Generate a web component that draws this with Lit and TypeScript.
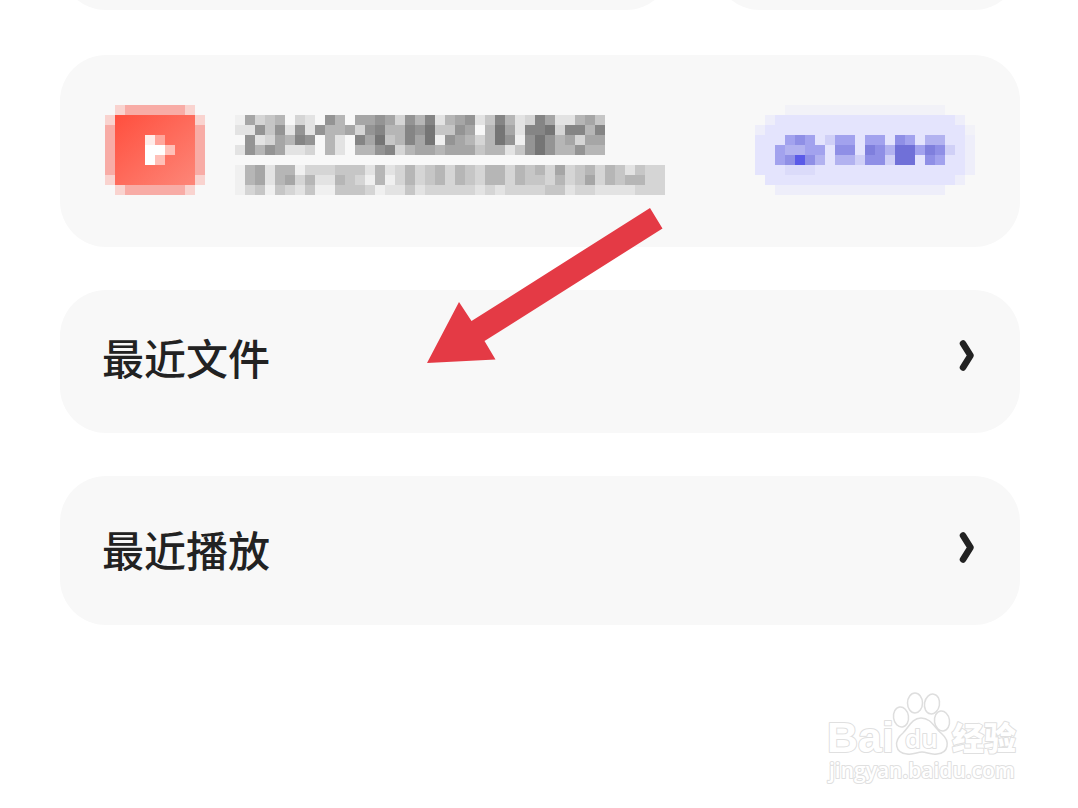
import { LitElement, html, svg, css } from "lit";
import { customElement, property } from "lit/decorators.js";

const CELL = 10;

// Each character is one mosaic cell: a key of the colour table, a dot is empty.
const TITLE = [
  "fadcb.de.9b.aa9ad9b8eba9ec8bed8aeebac",
  "ee9c9e9e9bbad98bb897cc9a.b7ae887d88b8",
  ".9edab89.be.8a7cb8a7f9abdb79f979badaa",
  "e9b9aeed.be.bb98dbaabaaacbbec979bb9bb",
];
const SUBTITLE = [
  "fbaebbfdddcccebedbdcbdbcdbbdbcbdadcbdbcecdd",
  "fbaebadbeebcdfbfdbdcbdbcdbbdbccdbdcadbcbbdd",
  "fdcfcdecffcccdfeecedddddededdddcceddeeeeddd",
];
const GREYS: Record<string, string> = {
  "7": "#757575",
  "8": "#858585",
  "9": "#949494",
  a: "#a6a6a6",
  b: "#b6b6b6",
  c: "#c6c6c6",
  d: "#d5d5d5",
  e: "#e3e3e3",
  f: "#f0f0f0",
};

const VIDEO = [
  ".lmmmmmml.",
  "l........l",
  "m........m",
  "m...pq...m",
  "m...wwr..m",
  "m...wr...m",
  "m........m",
  "l........l",
  ".lmmmmmml.",
];
const VIDEO_COLOURS = {
  l: "#f9d3cf",
  m: "#f8aca6",
  w: "#ffffff",
  p: "#ffece9",
  q: "#ffa69c",
  r: "#ffc0b8",
};

const BACKUP = [
  "...gggggggggggggggg...",
  ".feeeeeeeeeeeeeeeeeef.",
  "feeeeeeeeeeeeeeeeeeeeg",
  "eeebabedbbebbeabecceef",
  "eebccbbeaae9ac88b9adef",
  "eeba6aceccdaad88eabeef",
  "eeehhheeeeeeeeeeeeeeef",
  ".eeeeeeeeeeeeeeeeeeef.",
  "..fffffffffffffffff...",
];
const BACKUP_COLOURS = {
  "6": "#5a5ae8",
  "8": "#7070d8",
  "9": "#7f7fdd",
  a: "#8f8fe6",
  b: "#a2a2ee",
  c: "#b2b2f0",
  d: "#d0d0f7",
  e: "#e4e4fd",
  f: "#eeeefa",
  g: "#f2f2f8",
  h: "#dbdbfa",
};

const mosaic = (rows: string[], colours: Record<string, string>) =>
  rows.map((row, y) =>
    [...row].map((c, x) =>
      colours[c]
        ? svg`<rect x=${x * CELL} y=${y * CELL} width=${CELL} height=${CELL} fill=${colours[c]} shape-rendering="crispEdges"></rect>`
        : null
    )
  );

@customElement("mosaic-grid")
class MosaicGrid extends LitElement {
  @property({ attribute: false }) rows: string[] = [];
  @property({ attribute: false }) colours: Record<string, string> = GREYS;

  static styles = css`
    :host { display: block; }
    svg { display: block; }
  `;

  render() {
    return html`<svg width=${this.rows[0].length * CELL} height=${this.rows.length * CELL} aria-hidden="true">
      ${mosaic(this.rows, this.colours)}
    </svg>`;
  }
}

@customElement("app-root")
class AppRoot extends LitElement {
  static styles = css`
    :host {
      display: block;
      font-family: "Noto Sans CJK SC", sans-serif;
      color: #222;
      background: #fff;
    }
    * { box-sizing: border-box; }
    .page {
      display: flex;
      flex-direction: column;
      gap: 43px;
      min-height: 100vh;
      padding: 0 58px 20px 60px;
      overflow: hidden;
    }
    .card { background: #f8f8f8; border-radius: 46px; }
    .tiles {
      display: grid;
      grid-template-columns: 2fr 1fr;
      gap: 42px;
      margin: -90px 0 2px;
    }
    .tile { height: 100px; }
    .backup {
      display: flex;
      align-items: flex-start;
      gap: 30px;
      padding: 50px 45px 52px;
    }
    .video { display: block; flex: none; }
    .info {
      display: flex;
      flex-direction: column;
      gap: 10px;
      flex: 1;
      padding-top: 10px;
    }
    .action {
      border: 0;
      padding: 0;
      background: none;
      cursor: pointer;
    }
    .row {
      position: relative;
      display: flex;
      justify-content: space-between;
      align-items: flex-start;
      padding: 37px 45px 46px 42px;
      color: inherit;
      text-decoration: none;
      font-size: 42px;
      font-weight: 500;
      line-height: 60px;
    }
    .row.last { padding-top: 43px; }
    .chevron { display: block; margin-top: 12px; }
    .arrow {
      position: absolute;
      left: 367px;
      top: -82px;
      pointer-events: none;
    }
    .mark { align-self: flex-end; margin-top: auto; }
    .mark svg { display: block; }
    .outline {
      fill: #fff;
      stroke: #e0e0e0;
      stroke-width: 2px;
      paint-order: stroke;
      stroke-linejoin: round;
    }
    .url { font-family: "Open Sans", sans-serif; font-weight: 600; }
    .brand { font-family: "Liberation Sans", sans-serif; font-weight: 700; }
    .du { font-family: "Open Sans", sans-serif; font-weight: 600; }
    .paw { fill: #fff; stroke: #dedede; stroke-width: 1.5px; }
  `;

  private chevron() {
    return html`<svg class="chevron" width="16" height="34" viewBox="0 0 16 34" aria-hidden="true">
      <path d="M4 4.500 L11.500 16.500 L4 28.500" fill="none" stroke="#222" stroke-width="6.500" stroke-linecap="round" stroke-linejoin="round" />
    </svg>`;
  }

  render() {
    return html`<main class="page">
      <div class="tiles">
        <div class="card tile"></div>
        <div class="card tile"></div>
      </div>

      <section class="card backup">
        <svg class="video" width="100" height="90" aria-hidden="true">
          <defs>
            <linearGradient id="red" x1="0" y1="0" x2="1" y2="1">
              <stop offset="0" stop-color="#ff4f3e" />
              <stop offset="1" stop-color="#fd8678" />
            </linearGradient>
          </defs>
          <rect x="10" y="10" width="80" height="70" fill="url(#red)" />
          ${mosaic(VIDEO, VIDEO_COLOURS)}
        </svg>
        <div class="info">
          <mosaic-grid .rows=${TITLE}></mosaic-grid>
          <mosaic-grid .rows=${SUBTITLE}></mosaic-grid>
        </div>
        <button class="action" type="button" aria-label="备份">
          <mosaic-grid .rows=${BACKUP} .colours=${BACKUP_COLOURS}></mosaic-grid>
        </button>
      </section>

      <a class="card row" href="#files">
        <span>最近文件</span>
        ${this.chevron()}
        <svg class="arrow" width="236" height="156" viewBox="0 0 236 156" aria-hidden="true">
          <path d="M223 0 L235.500 20.500 L57.500 133 L68.500 151.500 L0 155 L32 94 L44.500 113 Z" fill="#e43a45" />
        </svg>
      </a>

      <a class="card row last" href="#plays">
        <span>最近播放</span>
        ${this.chevron()}
      </a>

      <footer class="mark">
        <svg width="196" height="98" viewBox="0 0 196 98">
          <text class="outline brand" x="3" y="62" font-size="43">Bai</text>
          <ellipse class="paw" cx="77" cy="27" rx="7.500" ry="10" transform="rotate(-8 77 27)" />
          <ellipse class="paw" cx="91" cy="13" rx="7.500" ry="10" />
          <ellipse class="paw" cx="108" cy="14" rx="7.500" ry="10" transform="rotate(10 108 14)" />
          <ellipse class="paw" cx="118" cy="31" rx="7.500" ry="10" transform="rotate(-8 118 31)" />
          <path class="paw" d="M97 28 C88 28 85 37 79 43 C69 51 71 63 83 64 C90 65 93 62 98 62 C103 62 106 65 113 64 C125 63 126 51 118 44 C110 37 107 28 97 28 Z" />
          <text class="outline du" x="81" y="58" font-size="26">du</text>
          <text class="outline" x="128" y="60" font-size="32" font-weight="900">经验</text>
          <text class="outline url" x="5" y="88" font-size="21">jingyan.baidu.com</text>
        </svg>
      </footer>
    </main>`;
  }
}
